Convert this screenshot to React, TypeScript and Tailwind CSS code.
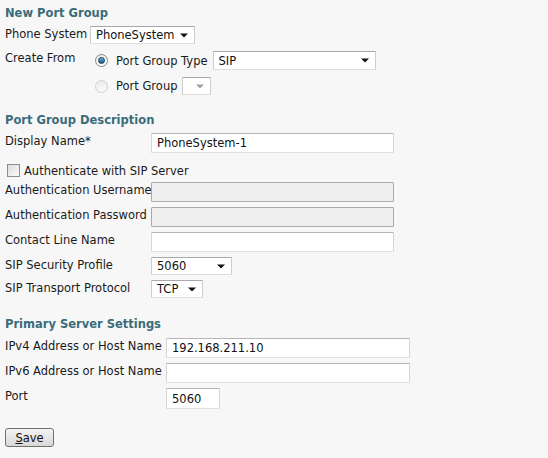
import React from "react";

const font = { fontFamily: '"DejaVu Sans", Verdana, sans-serif' };

function Arrow({ gray }: { gray?: boolean }) {
  return (
    <svg width="8" height="5" viewBox="0 0 8 5" className="shrink-0">
      <path d="M0 0.5 H8 L4 4.5 Z" fill={gray ? "#a0a0a0" : "#111"} />
    </svg>
  );
}

function Select({ w, h = 18, value, gray }: { w: string; h?: number; value?: string; gray?: boolean }) {
  return (
    <div
      className={`${w} flex items-center justify-between bg-white border border-t-[#a8a8a8] border-x-[#cdcdcd] border-b-[#dedede] rounded-[1px] pl-[5px] pr-[6px] shrink-0`}
      style={{ height: h }}
    >
      <span className="leading-[14px] text-[#111]">{value}</span>
      <Arrow gray={gray} />
    </div>
  );
}

function Input({ w, h = 20, value, disabled }: { w: string; h?: number; value?: string; disabled?: boolean }) {
  return (
    <div
      className={`${w} flex items-center shrink-0 pl-[5px] border rounded-[1px] ${
        disabled
          ? "bg-[#efefef] border-[#a9a9a9]"
          : "bg-white border-t-[#b5b5b5] border-x-[#d6d6d6] border-b-[#e0e0e0]"
      }`}
      style={{ height: h }}
    >
      <span className="leading-[14px] text-[#111]">{value}</span>
    </div>
  );
}

function Heading({ children, mt }: { children: React.ReactNode; mt: string }) {
  return <div className={`${mt} h-[14px] leading-[14px] font-bold text-[#3a6c7a]`}>{children}</div>;
}

function Row({ label, labelW, mt, h, children }: { label: string; labelW: string; mt: string; h: string; children: React.ReactNode }) {
  return (
    <div className={`flex items-start ${mt} ${h}`}>
      <div className={`${labelW} shrink-0 leading-[14px] pt-[1px] whitespace-nowrap`}>{label}</div>
      {children}
    </div>
  );
}

function Radio({ checked }: { checked?: boolean }) {
  return (
    <div
      className={`w-[13px] h-[13px] rounded-full shrink-0 flex items-center justify-center border ${
        checked ? "border-[#8a8a8a] bg-gradient-to-b from-[#e9e9e9] to-[#ffffff]" : "border-[#d0d0d0] bg-gradient-to-b from-[#ececec] to-[#fbfbfb]"
      }`}
    >
      {checked && <div className="w-[7px] h-[7px] rounded-full bg-gradient-to-b from-[#5db4e6] to-[#115a8c] border border-[#1b3c55]" />}
    </div>
  );
}

export default function App() {
  return (
    <div className="w-[548px] h-[458px] bg-[#f7f7f7] px-[5px] pt-[6px] text-[11.5px] text-[#1a1a1a] overflow-hidden" style={font}>
      <Heading mt="mt-0">New Port Group</Heading>

      <Row label="Phone System" labelW="w-[85px]" mt="mt-[6px]" h="h-[18px]">
        <Select w="w-[105px]" value="PhoneSystem" />
      </Row>

      <div className="flex items-start mt-[7px] h-[19px]">
        <div className="w-[90px] shrink-0 leading-[14px] pt-[0px]">Create From</div>
        <div className="flex items-center h-[19px]">
          <Radio checked />
          <span className="ml-[8px] leading-[14px]">Port Group Type</span>
          <div className="ml-[5px]">
            <Select w="w-[163px]" h={19} value="SIP" />
          </div>
        </div>
      </div>
      <div className="flex items-center mt-[7px] h-[18px] pl-[90px]">
        <Radio />
        <span className="ml-[8px] leading-[14px]">Port Group</span>
        <div className="ml-[5px]">
          <Select w="w-[29px]" h={18} gray />
        </div>
      </div>

      <Heading mt="mt-[18px]">Port Group Description</Heading>

      <Row label="Display Name*" labelW="w-[146px]" mt="mt-[6px]" h="h-[20px]">
        <Input w="w-[243px]" value="PhoneSystem-1" />
      </Row>

      <div className="flex items-center mt-[10px] h-[14px] pl-[2px]">
        <div className="w-[13px] h-[13px] border border-[#8e8e8e] bg-gradient-to-br from-[#dcdcdc] to-[#fafafa] shrink-0" />
        <span className="ml-[4px] leading-[14px] pt-[1px]">Authenticate with SIP Server</span>
      </div>

      <Row label="Authentication Username" labelW="w-[146px]" mt="mt-[5px]" h="h-[20px]">
        <Input w="w-[243px]" disabled />
      </Row>
      <Row label="Authentication Password" labelW="w-[146px]" mt="mt-[5px]" h="h-[20px]">
        <Input w="w-[243px]" disabled />
      </Row>
      <Row label="Contact Line Name" labelW="w-[146px]" mt="mt-[5px]" h="h-[20px]">
        <Input w="w-[243px]" />
      </Row>
      <Row label="SIP Security Profile" labelW="w-[146px]" mt="mt-[5px]" h="h-[18px]">
        <Select w="w-[81px]" value="5060" />
      </Row>
      <Row label="SIP Transport Protocol" labelW="w-[146px]" mt="mt-[5px]" h="h-[18px]">
        <Select w="w-[52px]" value="TCP" />
      </Row>

      <Heading mt="mt-[19px]">Primary Server Settings</Heading>

      <Row label="IPv4 Address or Host Name" labelW="w-[161px]" mt="mt-[7px]" h="h-[20px]">
        <Input w="w-[244px]" value="192.168.211.10" />
      </Row>
      <Row label="IPv6 Address or Host Name" labelW="w-[161px]" mt="mt-[5px]" h="h-[20px]">
        <Input w="w-[244px]" />
      </Row>
      <Row label="Port" labelW="w-[161px]" mt="mt-[5px]" h="h-[21px]">
        <Input w="w-[54px]" h={21} value="5060" />
      </Row>

      <div className="mt-[19px]">
        <button className="w-[49px] h-[19px] border border-[#707070] rounded-[3px] bg-gradient-to-b from-[#f4f4f4] to-[#d8d8d8] flex items-center justify-center leading-[14px] text-[11.5px] text-[#111]" style={font}>
          <span><span className="underline">S</span>ave</span>
        </button>
      </div>
    </div>
  );
}
